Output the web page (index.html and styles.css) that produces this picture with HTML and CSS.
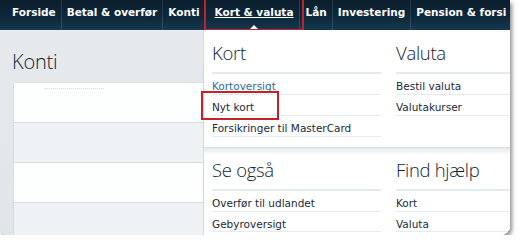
FILE: index.html
```html
<!DOCTYPE html>
<html lang="da">
<head>
<meta charset="utf-8">
<title>Kort &amp; valuta</title>
<link rel="stylesheet" href="styles.css">
</head>
<body>
<div class="frame">
  <nav class="nav">
    <a class="nav-item">Forside</a>
    <a class="nav-item">Betal &amp; overfør</a>
    <a class="nav-item">Konti</a>
    <a class="nav-item nav-active">Kort &amp; valuta<span class="caret"></span><span class="mark mark-nav"></span></a>
    <a class="nav-item">Lån</a>
    <a class="nav-item">Investering</a>
    <a class="nav-item">Pension &amp; forsi</a>
  </nav>
  <div class="main">
    <div class="content">
      <h1 class="page-title">Konti</h1>
      <div class="panel">
        <div class="panel-row"><span class="ghost"></span></div>
        <div class="panel-row alt"></div>
        <div class="panel-row"></div>
        <div class="panel-row alt"></div>
      </div>
    </div>
    <div class="dropdown">
      <div class="dd-section dd-top">
        <div class="dd-col">
          <h2 class="dd-head">Kort</h2>
          <ul class="dd-list">
            <li><a class="dd-link current">Kortoversigt</a></li>
            <li><a class="dd-link">Nyt kort</a><span class="mark mark-link"></span></li>
            <li><a class="dd-link">Forsikringer til MasterCard</a></li>
          </ul>
        </div>
        <div class="dd-col">
          <h2 class="dd-head">Valuta</h2>
          <ul class="dd-list">
            <li><a class="dd-link">Bestil valuta</a></li>
            <li><a class="dd-link">Valutakurser</a></li>
          </ul>
        </div>
      </div>
      <div class="dd-section dd-bottom">
        <div class="dd-col">
          <h2 class="dd-head">Se også</h2>
          <ul class="dd-list">
            <li><a class="dd-link">Overfør til udlandet</a></li>
            <li><a class="dd-link">Gebyroversigt</a></li>
          </ul>
        </div>
        <div class="dd-col">
          <h2 class="dd-head">Find hjælp</h2>
          <ul class="dd-list">
            <li><a class="dd-link">Kort</a></li>
            <li><a class="dd-link">Valuta</a></li>
          </ul>
        </div>
      </div>
    </div>
  </div>
</div>
</body>
</html>
```
FILE: styles.css
```css
html, body {
  margin: 0;
  padding: 0;
  background: #ffffff;
}

.frame {
  position: relative;
  width: 510px;
  height: 235px;
  overflow: hidden;
  border-radius: 0 0 9px 6px;
  box-shadow: 2px 3px 4px rgba(0, 0, 0, 0.45);
  background: #e3e8ea;
  font-family: "DejaVu Sans", Verdana, sans-serif;
}

.nav {
  display: flex;
  height: 30px;
  padding-left: 7px;
  background: linear-gradient(#0a1d2b, #0f2c40 70%, #153850);
  white-space: nowrap;
  overflow: hidden;
}

.nav-item {
  position: relative;
  display: block;
  flex: none;
  padding: 5px 5px 0;
  font-size: 10.5px;
  font-weight: bold;
  line-height: 14px;
  color: #ffffff;
  border-right: 1px solid rgba(255, 255, 255, 0.13);
}

.nav-item:last-child {
  border-right: 0;
}

.nav-active {
  text-decoration: underline;
  padding-left: 9px;
  padding-right: 6px;
}

.caret {
  position: absolute;
  left: 50%;
  bottom: 0;
  margin-left: -4px;
  width: 0;
  height: 0;
  border-left: 5px solid transparent;
  border-right: 5px solid transparent;
  border-bottom: 5px solid #ffffff;
}

.mark {
  position: absolute;
  border: 2px solid #c4222b;
  pointer-events: none;
}

.mark-nav {
  left: -2px;
  top: -3px;
  right: -5px;
  bottom: -1px;
}

.main {
  position: relative;
  height: 205px;
}

.content {
  height: 100%;
  padding: 19px 0 0 13px;
  box-sizing: border-box;
  background: linear-gradient(180deg, #e6eaec, #e0e5e7);
  border-top: 1px solid #eef1f2;
}

.page-title {
  margin: 0 0 8px -1px;
  font-family: "Open Sans", sans-serif;
  font-weight: 300;
  font-size: 20px;
  line-height: 24px;
  color: #0e2538;
  letter-spacing: -0.2px;
}

.panel {
  width: 300px;
  border: 1px solid #d5dde1;
  border-bottom: 0;
  border-radius: 3px 0 0 0;
  background: #ffffff;
}

.panel-row {
  position: relative;
  height: 39px;
  border-bottom: 1px solid #d6dee2;
  background: #fdfefe;
}

.panel-row.alt {
  background: #eef2f4;
}

.ghost {
  position: absolute;
  left: 30px;
  top: 5px;
  width: 60px;
  height: 1px;
  border-top: 1px dotted #cfdeea;
}

.dropdown {
  position: absolute;
  left: 203px;
  top: 0;
  right: 0;
  bottom: 0;
  display: flex;
  flex-direction: column;
  background: #ffffff;
  border-left: 1px solid #d2d9dd;
}

.dd-section {
  display: grid;
  grid-template-columns: 169px 1fr;
  column-gap: 15px;
  padding: 12px 0 0 8px;
}

.dd-top {
  height: 118px;
  box-sizing: border-box;
  border-bottom: 1px solid #d9dfe3;
}

.dd-bottom {
  flex: 1;
  padding-top: 11px;
  background: linear-gradient(180deg, #e5eaed 0, #ffffff 7px);
}

.dd-head {
  margin: 0;
  padding-bottom: 8px;
  border-bottom: 2px solid #e3eaf0;
  font-family: "Open Sans", sans-serif;
  font-weight: 300;
  font-size: 18.5px;
  line-height: 22px;
  color: #0e2538;
  letter-spacing: -0.3px;
  white-space: nowrap;
}

.dd-list {
  margin: 0;
  padding: 0;
  list-style: none;
}

.dd-list li {
  position: relative;
  height: 20px;
  border-bottom: 1.5px solid #e3eaf0;
  line-height: 21px;
  white-space: nowrap;
}

.dd-bottom .dd-list li {
  height: 19.5px;
}

.dd-link {
  font-size: 10.5px;
  color: #1b2a38;
}

.dd-link.current {
  color: #2b6d93;
  text-decoration: underline;
}

.mark-link {
  left: -11px;
  top: -4px;
  width: 74px;
  height: 25px;
}
```
